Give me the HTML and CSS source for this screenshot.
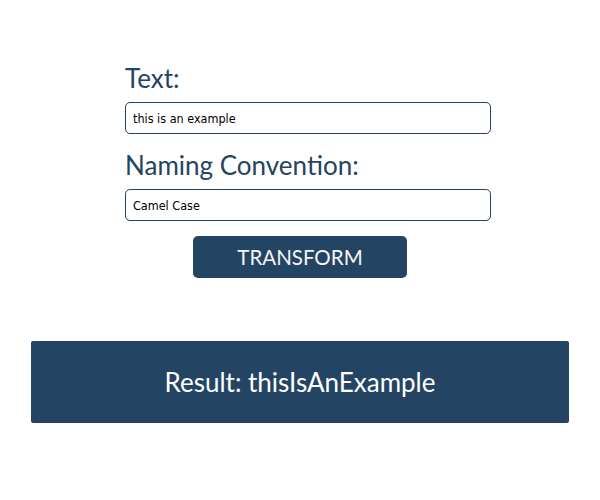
FILE: index.html
```html
<!DOCTYPE html>
<html>
<head>
<meta charset="utf-8">
<link rel="stylesheet" href="styles.css">
</head>
<body>
<div class="page">
  <form class="form">
    <label class="label" for="text">Text:</label>
    <input class="field" id="text" type="text" value="this is an example">
    <label class="label label-second" for="conv">Naming Convention:</label>
    <input class="field" id="conv" type="text" value="Camel Case">
    <div class="actions">
      <button class="btn" type="button">TRANSFORM</button>
    </div>
  </form>
  <div class="result">Result: thisIsAnExample</div>
</div>
</body>
</html>
```
FILE: styles.css
```css
html, body {
  margin: 0;
  padding: 0;
  background: #ffffff;
}
body {
  padding: 0 8px;
  font-family: "Lato", "Liberation Sans", sans-serif;
}
.page {
  display: flex;
  flex-direction: column;
  align-items: center;
  padding-top: 63px;
}
.form {
  width: 350px;
  display: flex;
  flex-direction: column;
  align-items: flex-start;
}
.label {
  display: block;
  font-size: 26px;
  line-height: 30px;
  color: #24445f;
  margin-bottom: 9px;
}
.label-second {
  margin-top: 16px;
}
.field {
  box-sizing: border-box;
  width: 366px;
  height: 32px;
  margin: 0;
  padding: 0 7px;
  border: 1px solid #24445f;
  border-radius: 5px;
  font-family: "DejaVu Sans Condensed", "DejaVu Sans", sans-serif;
  font-stretch: condensed;
  font-size: 12.5px;
  color: #000000;
  background: #ffffff;
  outline: none;
}
.actions {
  width: 100%;
  display: flex;
  justify-content: center;
  margin-top: 15px;
}
.btn {
  box-sizing: border-box;
  width: 214px;
  height: 42px;
  border: none;
  border-radius: 5px;
  background: #244464;
  color: #f4f6f8;
  font-family: "Lato", sans-serif;
  font-size: 20.5px;
  padding: 0;
  cursor: pointer;
}
.result {
  box-sizing: border-box;
  width: 538px;
  height: 82px;
  margin-top: 63px;
  border-radius: 2px;
  background: #244464;
  color: #ffffff;
  font-size: 26px;
  display: flex;
  align-items: center;
  justify-content: center;
}
```
